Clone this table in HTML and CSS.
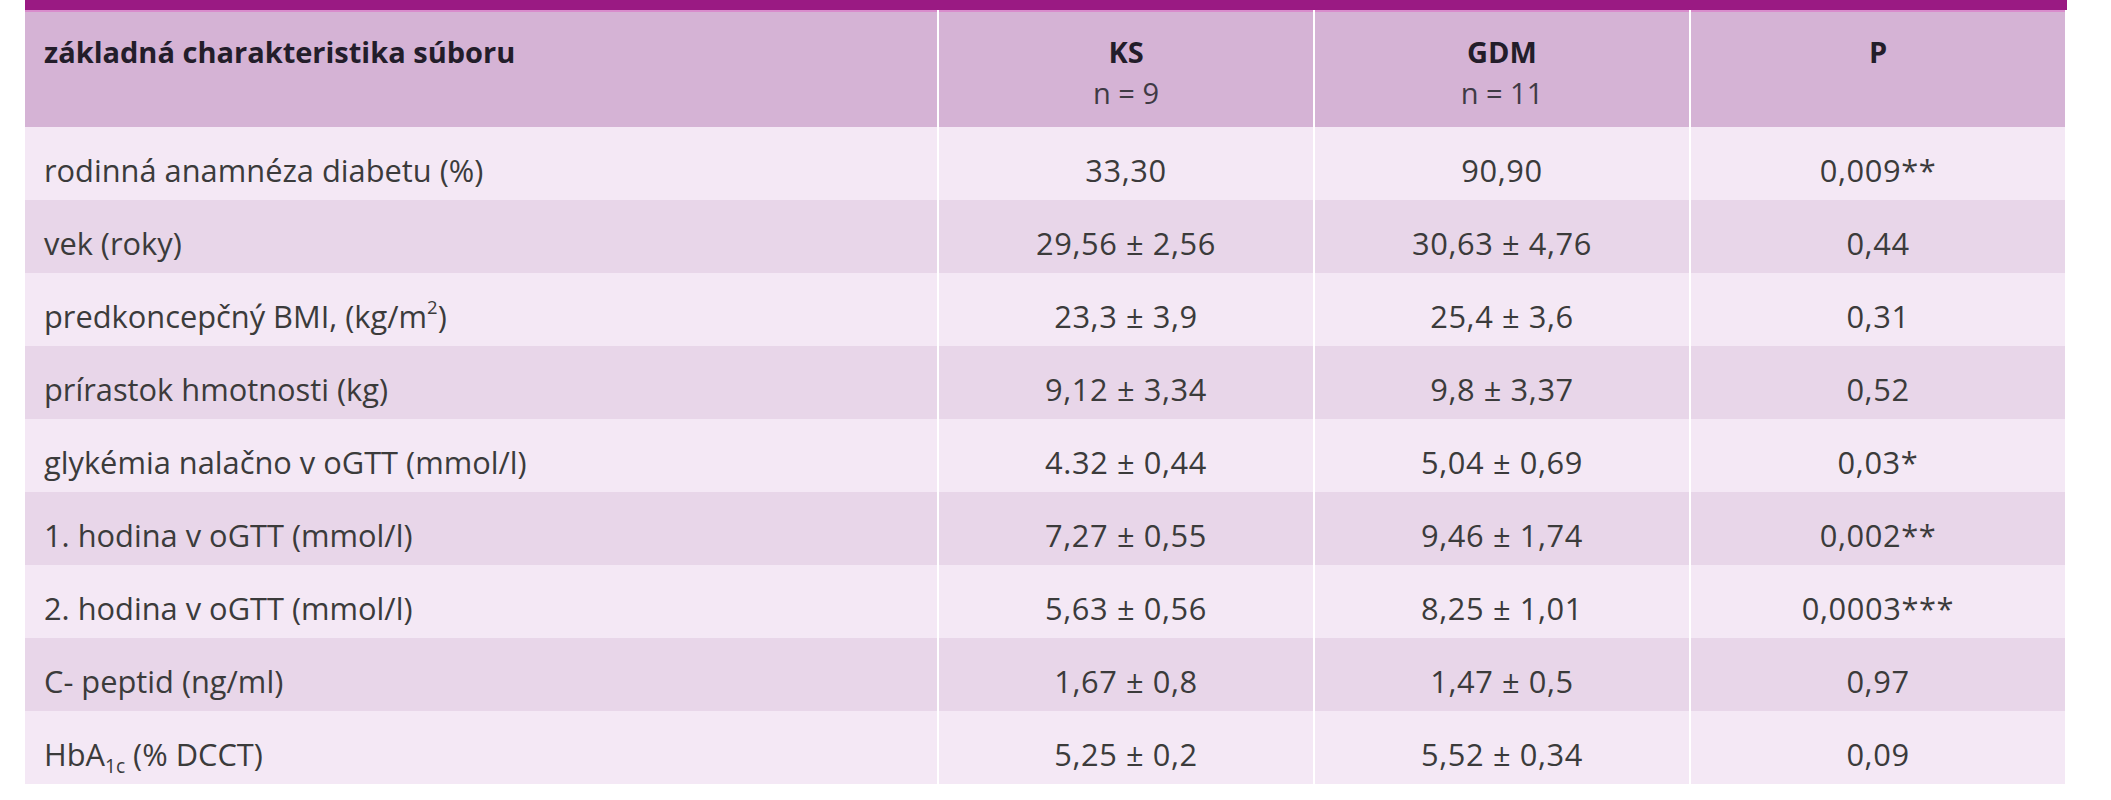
FILE: index.html
```html
<!DOCTYPE html>
<html lang="sk">
<head>
<meta charset="utf-8">
<title>základná charakteristika súboru</title>
<link rel="stylesheet" href="styles.css">
</head>
<body>
<div class="page">
  <div class="frame">
    <table class="stats">
      <colgroup>
        <col class="c-label">
        <col class="c-val">
        <col class="c-val">
        <col class="c-val">
      </colgroup>
      <thead>
        <tr>
          <th class="label">základná charakteristika súboru</th>
          <th>KS<br><span class="n">n = 9</span></th>
          <th>GDM<br><span class="n">n = 11</span></th>
          <th>P</th>
        </tr>
      </thead>
      <tbody>
        <tr><td class="label">rodinná anamnéza diabetu (%)</td><td>33,30</td><td>90,90</td><td>0,009**</td></tr>
        <tr><td class="label">vek (roky)</td><td>29,56 ± 2,56</td><td>30,63 ± 4,76</td><td>0,44</td></tr>
        <tr><td class="label">predkoncepčný BMI, (kg/m<sup>2</sup>)</td><td>23,3 ± 3,9</td><td>25,4 ± 3,6</td><td>0,31</td></tr>
        <tr><td class="label">prírastok hmotnosti (kg)</td><td>9,12 ± 3,34</td><td>9,8 ± 3,37</td><td>0,52</td></tr>
        <tr><td class="label">glykémia nalačno v oGTT (mmol/l)</td><td>4.32 ± 0,44</td><td>5,04 ± 0,69</td><td>0,03*</td></tr>
        <tr><td class="label">1. hodina v oGTT (mmol/l)</td><td>7,27 ± 0,55</td><td>9,46 ± 1,74</td><td>0,002**</td></tr>
        <tr><td class="label">2. hodina v oGTT (mmol/l)</td><td>5,63 ± 0,56</td><td>8,25 ± 1,01</td><td>0,0003***</td></tr>
        <tr><td class="label">C- peptid (ng/ml)</td><td>1,67 ± 0,8</td><td>1,47 ± 0,5</td><td>0,97</td></tr>
        <tr><td class="label">HbA<sub>1c</sub> (% DCCT)</td><td>5,25 ± 0,2</td><td>5,52 ± 0,34</td><td>0,09</td></tr>
      </tbody>
    </table>
  </div>
</div>
</body>
</html>
```
FILE: styles.css
```css
html, body {
  margin: 0;
  padding: 0;
  background: #ffffff;
}

.page {
  padding: 0 44px 0 25px;
  font-family: "Open Sans", "Noto Sans", "Liberation Sans", sans-serif;
}

.frame {
  width: 2042px;
  border-top: 10px solid #9a1a83;
}

.stats {
  width: 2040px;
  border-collapse: separate;
  border-spacing: 0;
  table-layout: fixed;
  color: #3b3b3b;
}

.c-label { width: 912px; }
.c-val { width: 376px; }

.stats th,
.stats td {
  text-align: center;
  border-left: 2px solid #ffffff;
  padding: 0 10px;
  box-sizing: border-box;
  vertical-align: top;
}

.stats th:first-child,
.stats td:first-child {
  border-left: none;
}

.stats .label {
  text-align: left;
  padding-left: 19px;
}

.stats thead th {
  background: #d5b3d5;
  color: #231d2a;
  font-size: 29px;
  line-height: 41px;
  font-weight: 700;
  height: 117px;
  padding-top: 21px;
  box-shadow: inset 0 2px 0 #d98ccc;
}

.stats thead .n {
  font-weight: 400;
  color: #3f3a44;
}

.stats tbody td {
  font-size: 30.8px;
  line-height: 44px;
  height: 73px;
  padding-top: 21px;
  padding-bottom: 8px;
  letter-spacing: 0.6px;
}

.stats tbody td.label {
  letter-spacing: 0;
}

.stats tbody tr:nth-child(odd) td { background: #f4e8f5; }
.stats tbody tr:nth-child(even) td { background: #e8d6e9; }

.stats sup {
  font-size: 60%;
  line-height: 0;
  vertical-align: 0.75em;
}

.stats sub {
  font-size: 62%;
  line-height: 0;
  vertical-align: -0.35em;
}
```
